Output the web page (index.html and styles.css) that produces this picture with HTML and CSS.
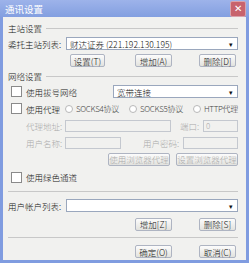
FILE: index.html
```html
<!DOCTYPE html>
<html lang="zh">
<head>
    <meta charset="UTF-8">
    <title>通讯设置</title>
    <link rel="stylesheet" href="styles.css">
</head>
<body>
    <div class="window">
        <div class="titlebar">
            <span class="title">通讯设置</span>
            <span class="close">✕</span>
        </div>
        <div class="content">
            <div class="group-title"><span>主站设置</span></div>
            <div class="row">
                <label class="lbl">委托主站列表:</label>
                <div class="select main-select">财达证券 (221.192.130.195)<span class="arrow">▾</span></div>
            </div>
            <div class="btn-row">
                <button class="btn btn-set">设置(T)</button>
                <button class="btn btn-add">增加(A)</button>
                <button class="btn btn-del">删除[D]</button>
            </div>

            <div class="group-title"><span>网络设置</span></div>
            <div class="row">
                <span class="check"></span>
                <span class="check-label">使用拔号网络</span>
                <div class="select dial-select">宽带连接<span class="arrow">▾</span></div>
            </div>
            <div class="row">
                <span class="check"></span>
                <span class="check-label proxy-label">使用代理</span>
                <span class="radio"></span><span class="opt">SOCKS4协议</span>
                <span class="radio"></span><span class="opt">SOCKS5协议</span>
                <span class="radio"></span><span class="opt last">HTTP代理</span>
            </div>
            <div class="row dim">
                <span class="sub-lbl">代理地址:</span>
                <span class="input addr"></span>
                <span class="port-lbl">端口:</span>
                <span class="input port">0</span>
            </div>
            <div class="row dim">
                <span class="sub-lbl">用户名称:</span>
                <span class="input user"></span>
                <span class="pwd-lbl">用户密码:</span>
                <span class="input pwd"></span>
            </div>
            <div class="btn-row browser-row">
                <button class="btn dim-btn">使用浏览器代理</button>
                <button class="btn dim-btn">设置浏览器代理</button>
            </div>
            <div class="row green-row">
                <span class="check"></span>
                <span class="check-label">使用绿色通道</span>
            </div>
            <div class="sep"></div>
            <div class="row">
                <label class="lbl">用户帐户列表:</label>
                <div class="select acct-select"><span class="arrow">▾</span></div>
            </div>
            <div class="btn-row acct-btns">
                <button class="btn btn-add">增加[Z]</button>
                <button class="btn btn-del">删除[S]</button>
            </div>
            <div class="sep bottom-sep"></div>
            <div class="btn-row">
                <button class="btn btn-add">确定(O)</button>
                <button class="btn btn-del">取消(C)</button>
            </div>
        </div>
    </div>
</body>
</html>
```

FILE: styles.css
```css
/* window frame */
body {
    margin: 0;
    font-family: "Noto Sans CJK SC", "DejaVu Sans", sans-serif;
    font-size: 8.5px;
    font-weight: 300;
    color: #111;
    background: #fff;
}

.window {
    width: 249px;
    height: 263px;
    box-sizing: border-box;
    background: #f1f1ef;
    border: 3px solid #809ce0;
    border-top: none;
    display: flex;
    flex-direction: column;
}

.titlebar {
    height: 21px;
    margin: 0 -3px;
    background: linear-gradient(180deg, #9db3ea, #839fe0);
    display: flex;
    align-items: center;
    justify-content: space-between;
    padding: 0 3px 0 5px;
}

.title {
    color: #fff;
    font-size: 9.5px;
    font-weight: 400;
}

.close {
    width: 14px;
    height: 14px;
    background: #c8636d;
    border: 1px solid #d9a3ac;
    border-radius: 2px;
    color: #fff;
    font-size: 10px;
    font-family: "DejaVu Sans", sans-serif;
    display: flex;
    align-items: center;
    justify-content: center;
}

.content {
    padding: 4px 8px 0 5px;
    display: flex;
    flex-direction: column;
}

/* group headings with a line */
.group-title {
    display: flex;
    align-items: center;
    height: 14px;
}

.group-title::after {
    content: "";
    flex: 1;
    border-top: 1px solid #c8c8c8;
    margin-left: 4px;
}

.row {
    display: flex;
    align-items: center;
    height: 17px;
    white-space: nowrap;
}

.lbl {
    width: 58px;
}

.select {
    height: 13px;
    border: 1px solid #9aa7bd;
    background: #fff;
    display: flex;
    align-items: center;
    padding-left: 3px;
    position: relative;
    box-sizing: border-box;
}

.arrow {
    position: absolute;
    right: 4px;
    top: 0;
    font-size: 7px;
    line-height: 12px;
}

.main-select { flex: 1; }
.acct-select { flex: 1; }
.dial-select { margin-left: auto; width: 125px; }

/* buttons */
.btn-row {
    display: flex;
    justify-content: flex-end;
    gap: 27px;
    height: 17px;
    align-items: center;
    padding-right: 2px;
}

.btn {
    font-family: inherit;
    font-size: 8.5px;
    font-weight: 300;
    height: 13px;
    padding: 0;
    width: 37px;
    background: linear-gradient(180deg, #fcfcfc, #e2e2de);
    border: 1px solid #aeb4c2;
    border-radius: 2px;
    color: #111;
    display: flex;
    align-items: center;
    justify-content: center;
    white-space: nowrap;
}

.btn-row .btn-set { margin-right: 3px; width: 35px; }

.check {
    width: 9px;
    height: 9px;
    border: 1px solid #8a8a8a;
    background: #fff;
    margin: 0 4px 0 3px;
    flex-shrink: 0;
}

.proxy-label { width: 42px; }

.radio {
    width: 6px;
    height: 6px;
    border-radius: 50%;
    border: 1px solid #b8b8b8;
    background: #fff;
    margin-right: 3px;
    flex-shrink: 0;
}

.opt {
    color: #444;
    margin-right: 10px;
    font-size: 8px;
    letter-spacing: -0.3px;
}

.opt.last { margin-right: 0; }

.dim {
    color: #aaa;
}

.sub-lbl { margin-left: 18px; width: 39px; }

.input {
    height: 12px;
    border: 1px solid #c4c8cf;
    background: #f1f1ef;
    box-sizing: border-box;
    font-size: 8px;
    padding-left: 2px;
    line-height: 10px;
}

.addr { width: 106px; }
.port-lbl { margin-left: 9px; width: 23px; }
.port { flex: 1; }
.user { width: 56px; }
.pwd-lbl { margin-left: 22px; width: 40px; }
.pwd { flex: 1; }

.browser-row { gap: 6px; height: 16px; padding-right: 0; }
.dim-btn { width: 62px; color: #aaa; }

.green-row { height: 20px; }

.sep {
    border-top: 1px solid #c8c8c8;
    margin: 4px 0 5px;
}

.acct-btns { height: 20px; }
.bottom-sep { margin: 3px 0 5px; }
```
